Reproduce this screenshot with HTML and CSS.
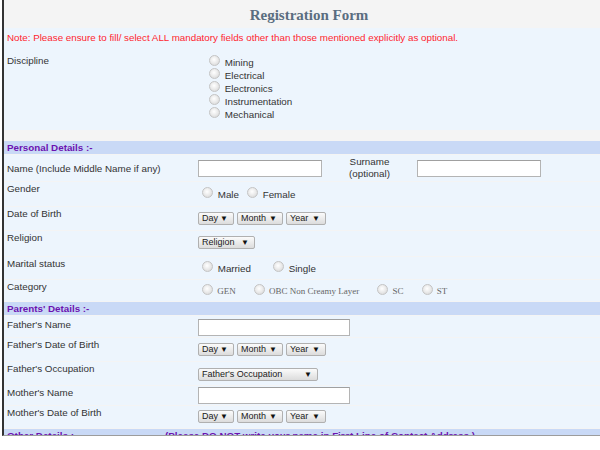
FILE: index.html
```html
<!DOCTYPE html>
<html>
	<head>
		<meta charset="UTF-8">
		<title>Registration Form</title>
		<link rel="stylesheet" href="styles.css">
	</head>
	<body>
		<div class="frame">
			<h1 class="title">Registration Form</h1>

			<!-- note + discipline -->
			<div class="intro">
				<p class="note">Note: Please ensure to fill/ select ALL mandatory fields other than those mentioned explicitly as optional.</p>
				<div class="disc">
					<div class="lbl disc-lbl">Discipline</div>
					<ul class="disc-list">
						<li><input type="radio" name="disc"> Mining</li>
						<li><input type="radio" name="disc"> Electrical</li>
						<li><input type="radio" name="disc"> Electronics</li>
						<li><input type="radio" name="disc"> Instrumentation</li>
						<li><input type="radio" name="disc"> Mechanical</li>
					</ul>
				</div>
			</div>

			<!-- personal -->
			<div class="sect">Personal Details :-</div>
			<div class="row r-name">
				<div class="lbl">Name (Include Middle Name if any)</div>
				<div class="val">
					<input type="text" class="txt txt-s">
					<span class="sur">Surname<br>(optional)</span>
					<input type="text" class="txt txt-s">
				</div>
			</div>
			<div class="row r-gender">
				<div class="lbl">Gender</div>
				<div class="val">
					<label class="opt"><input type="radio" name="g"> Male</label>
					<label class="opt"><input type="radio" name="g"> Female</label>
				</div>
			</div>
			<div class="row r-dob">
				<div class="lbl">Date of Birth</div>
				<div class="val">
					<span class="dd dd-day">Day <i>&#9660;</i></span>
					<span class="dd dd-month">Month <i>&#9660;</i></span>
					<span class="dd dd-year">Year <i>&#9660;</i></span>
				</div>
			</div>
			<div class="row r-rel">
				<div class="lbl">Religion</div>
				<div class="val">
					<span class="dd dd-rel">Religion <i>&#9660;</i></span>
				</div>
			</div>
			<div class="row r-mar">
				<div class="lbl">Marital status</div>
				<div class="val">
					<label class="opt wide"><input type="radio" name="m"> Married</label>
					<label class="opt"><input type="radio" name="m"> Single</label>
				</div>
			</div>
			<div class="row r-cat">
				<div class="lbl">Category</div>
				<div class="val cat">
					<label class="opt"><input type="radio" name="c"> GEN</label>
					<label class="opt"><input type="radio" name="c"> OBC Non Creamy Layer</label>
					<label class="opt"><input type="radio" name="c"> SC</label>
					<label class="opt"><input type="radio" name="c"> ST</label>
				</div>
			</div>

			<!-- parents -->
			<div class="sect">Parents' Details :-</div>
			<div class="row r-fname">
				<div class="lbl">Father's Name</div>
				<div class="val"><input type="text" class="txt"></div>
			</div>
			<div class="row r-fdob">
				<div class="lbl">Father's Date of Birth</div>
				<div class="val">
					<span class="dd dd-day">Day <i>&#9660;</i></span>
					<span class="dd dd-month">Month <i>&#9660;</i></span>
					<span class="dd dd-year">Year <i>&#9660;</i></span>
				</div>
			</div>
			<div class="row r-occ">
				<div class="lbl">Father's Occupation</div>
				<div class="val">
					<span class="dd dd-occ">Father's Occupation <i>&#9660;</i></span>
				</div>
			</div>
			<div class="row r-mname">
				<div class="lbl">Mother's Name</div>
				<div class="val"><input type="text" class="txt"></div>
			</div>
			<div class="row r-mdob">
				<div class="lbl">Mother's Date of Birth</div>
				<div class="val">
					<span class="dd dd-day">Day <i>&#9660;</i></span>
					<span class="dd dd-month">Month <i>&#9660;</i></span>
					<span class="dd dd-year">Year <i>&#9660;</i></span>
				</div>
			</div>

			<!-- other -->
			<div class="sect sect-other">
				<span class="other-lbl">Other Details :-</span>
				<span>(Please DO NOT write your name in First Line of Contact Address )</span>
			</div>
		</div>
	</body>
</html>
```

FILE: styles.css
```css
*{
	margin: 0px;
	padding: 0px;
	box-sizing: border-box;
}

ul{
	list-style: none;
}

body{
	background: #FFFFFF;
	overflow: hidden;
	font-family: "Liberation Sans", Arial, sans-serif;
	font-size: 9.8px;
	color: #333333;
}

.frame{ /*整体容器*/
	width: 612px;
	height: 436px;
	margin-left: 2px;
	border-left: 2px solid #333333;
	border-bottom: 1px solid #9c9c9c;
	background: #f4f4f4;
	overflow: hidden;
}

.title{
	height: 28px;
	padding-top: 6px;
	text-align: center;
	font-family: "Liberation Serif", "Times New Roman", serif;
	font-size: 15px;
	line-height: 18px;
	color: #5a6d80;
}

/*说明 + 专业*/
.intro{
	background: #edf5fd;
	padding-top: 3px;
	height: 102px;
}

.note{
	padding-left: 3px;
	line-height: 13px;
	color: #ff1f2f;
}

.disc{
	display: flex;
}

.lbl{
	width: 194px;
	flex: none;
	padding-left: 3px;
	line-height: 13px;
}

.disc-lbl{
	padding-top: 10px;
}

.disc-list{
	padding-top: 12px;
	padding-left: 7px;
}

.disc-list li{
	height: 13px;
	line-height: 13px;
}

input[type=radio]{
	appearance: none;
	-webkit-appearance: none;
	width: 11px;
	height: 11px;
	margin: -1px 2px 0 4px;
	border: 1px solid #c4c4c4;
	border-radius: 50%;
	background: radial-gradient(circle at 45% 40%, #ffffff 0%, #ececec 45%, #d2d2d2 100%);
	vertical-align: top;
}

/*分组标题*/
.sect{
	margin-top: 11px;
	height: 13px;
	padding-left: 3px;
	line-height: 13px;
	background: #c9d9f6;
	color: #6c12b0;
	font-weight: bold;
}

.row + .sect{
	margin-top: 1px;
}

.row{
	display: flex;
	margin-top: 1px;
	background: #edf5fd;
}

.val{
	flex: 1;
	display: flex;
	align-items: flex-start;
	line-height: 13px;
}

.txt{
	width: 152px;
	height: 17px;
	border: 1px solid #b4b4b4;
	border-top-color: #a0a0a0;
	background: #FFFFFF;
}

.txt-s{
	width: 124px;
}

.sur{
	width: 95px;
	text-align: center;
	line-height: 12px;
}

.opt{
	white-space: nowrap;
	height: 13px;
}

.opt + .opt{
	margin-left: 4px;
}

.opt.wide{
	margin-right: 14px;
}

.cat .opt{
	font-family: "Liberation Serif", "Times New Roman", serif;
	font-size: 9px;
	color: #666666;
	margin-right: 14px;
}

.cat .opt + .opt{
	margin-left: 0px;
}

/*下拉框*/
.dd{
	display: inline-flex;
	justify-content: space-between;
	align-items: center;
	height: 13px;
	margin-right: 3px;
	padding: 0 5px 0 3px;
	border: 1px solid #b0b0b0;
	border-radius: 2px;
	background: linear-gradient(#fbfbfb, #dcdcdc);
	font-size: 9px;
	color: #1a1a1a;
}

.dd i{
	font-style: normal;
	font-size: 8px;
	color: #111111;
}

.dd-day{ width: 36px; }
.dd-month{ width: 46px; }
.dd-year{ width: 40px; }
.dd-rel{ width: 57px; }
.dd-occ{ width: 120px; }

/*每行高度*/
.r-name{ height: 26px; align-items: center; }
.r-name .val{ align-items: center; }
.r-gender{ height: 24px; }
.r-gender .val{ padding-top: 6px; }
.r-dob{ height: 23px; }
.r-dob .val{ padding-top: 5px; }
.r-rel{ height: 25px; }
.r-rel .val{ padding-top: 5px; }
.r-mar{ height: 22px; }
.r-mar .val{ padding-top: 5px; }
.r-cat{ height: 21px; }
.r-cat .val{ padding-top: 5px; }
.r-fname{ height: 21px; }
.r-fname .lbl{ padding-top: 2px; }
.r-fname .val{ padding-top: 3px; }
.r-fdob{ height: 23px; }
.r-fdob .val{ padding-top: 5px; }
.r-occ{ height: 23px; }
.r-occ .val{ padding-top: 6px; }
.r-mname{ height: 19px; }
.r-mname .val{ padding-top: 1px; }
.r-mdob{ height: 22px; }
.r-mdob .val{ padding-top: 4px; }

.sect-other{
	display: flex;
}

.other-lbl{
	width: 158px;
}
```
